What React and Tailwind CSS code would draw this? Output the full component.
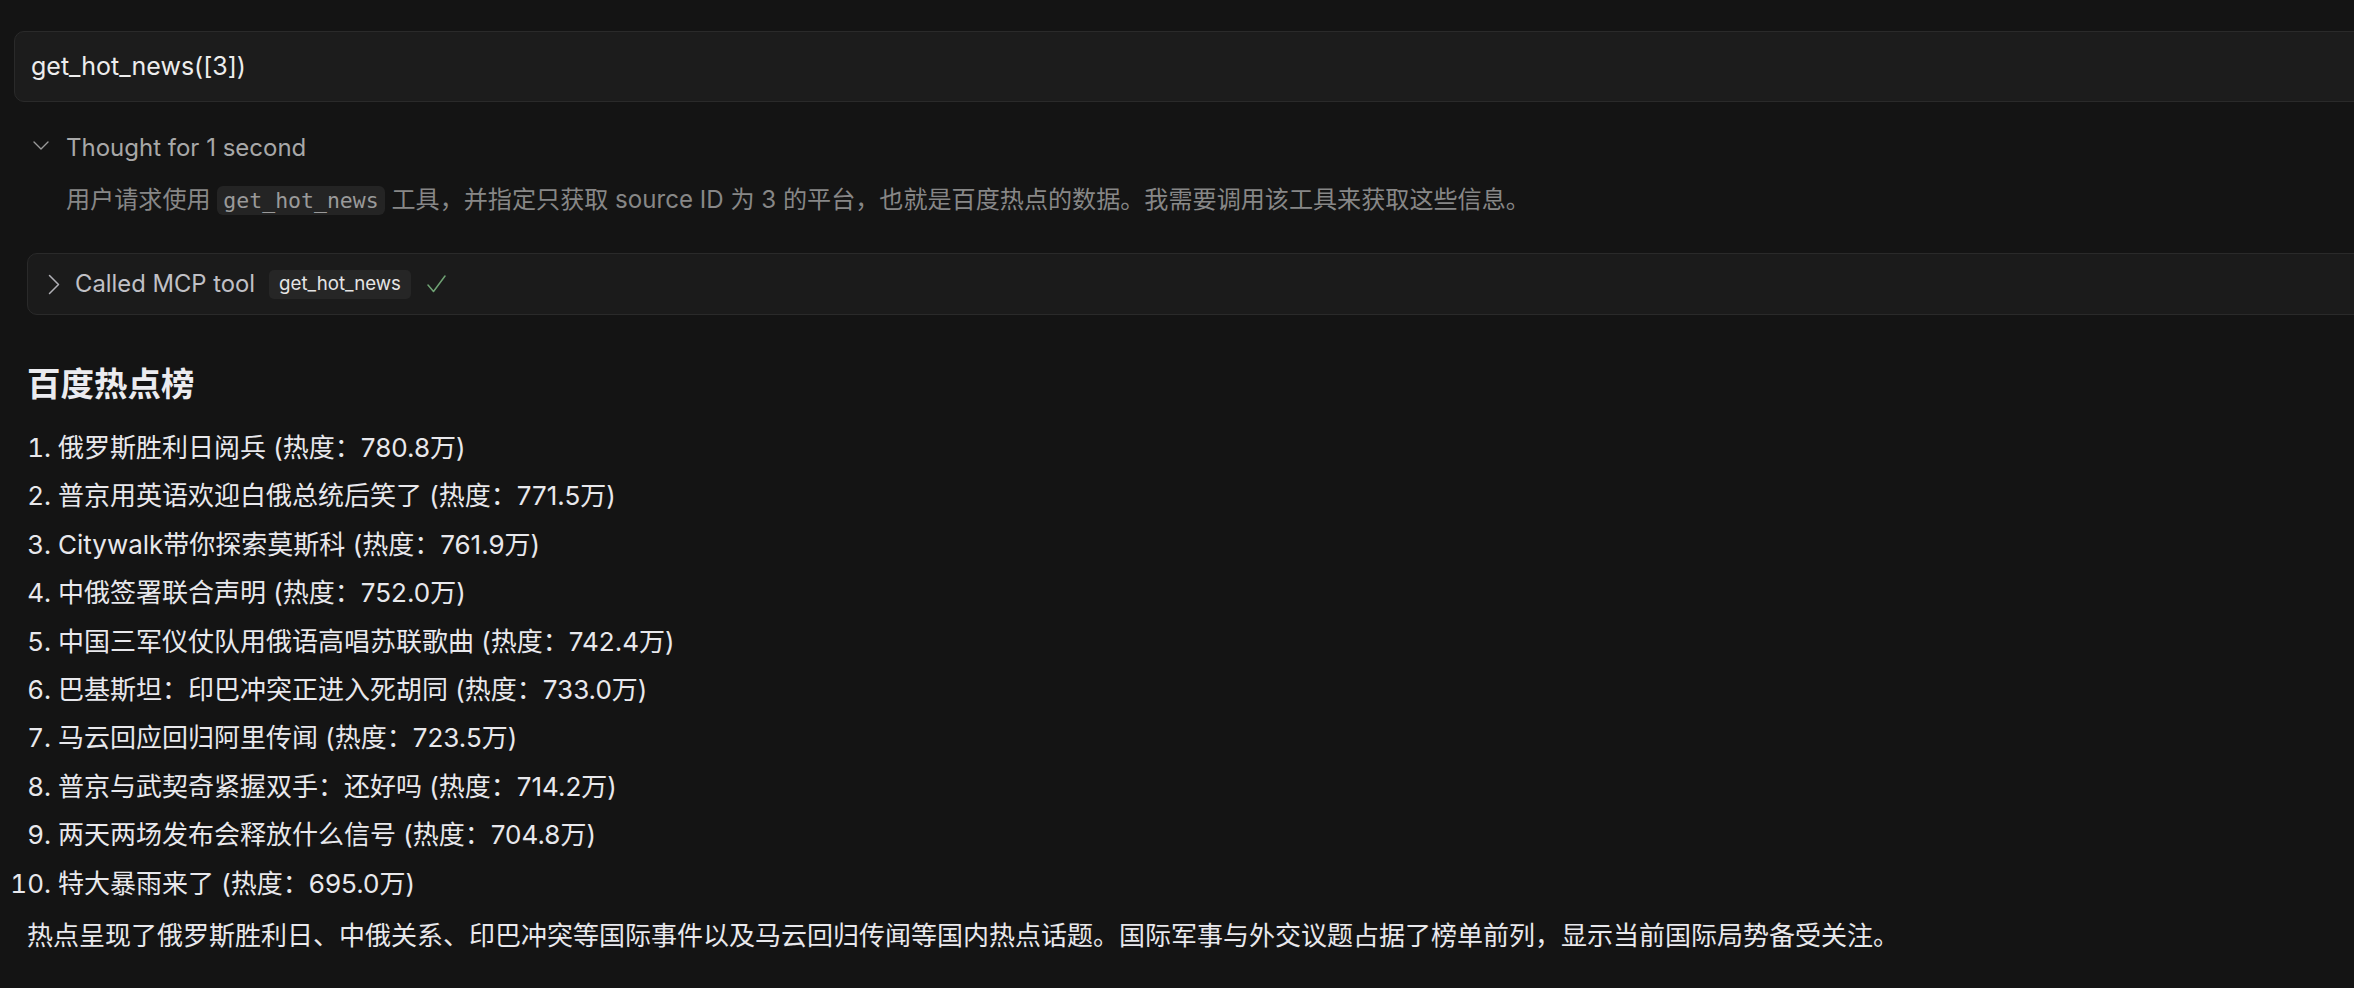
import React from "react";

const items = [
  "俄罗斯胜利日阅兵 (热度：780.8万)",
  "普京用英语欢迎白俄总统后笑了 (热度：771.5万)",
  "Citywalk带你探索莫斯科 (热度：761.9万)",
  "中俄签署联合声明 (热度：752.0万)",
  "中国三军仪仗队用俄语高唱苏联歌曲 (热度：742.4万)",
  "巴基斯坦：印巴冲突正进入死胡同 (热度：733.0万)",
  "马云回应回归阿里传闻 (热度：723.5万)",
  "普京与武契奇紧握双手：还好吗 (热度：714.2万)",
  "两天两场发布会释放什么信号 (热度：704.8万)",
  "特大暴雨来了 (热度：695.0万)",
];

export default function App() {
  return (
    <div className="min-h-screen overflow-hidden bg-[#141414] pl-[14px] pt-[31px] font-[family-name:Inter,'Noto_Sans_CJK_SC',sans-serif] text-[#e8e8ec]">
      {/* tool call input */}
      <div className="-mr-10 flex h-[71px] items-center rounded-[10px] border border-[#2a2a2a] bg-[#1c1c1c] pl-[16px] text-[25px] text-[#ededed]">
        get_hot_news([3])
      </div>

      {/* thought header */}
      <div className="mt-[30px] flex h-[32px] items-center">
        <svg
          className="ml-[19px] mt-[-6px]"
          width="16"
          height="9"
          viewBox="0 0 16 9"
          fill="none"
          stroke="#9a9a9a"
          strokeWidth="1.4"
          strokeLinecap="round"
          strokeLinejoin="round"
        >
          <polyline points="1,1 8,8 15,1" />
        </svg>
        <span className="ml-[17px] text-[24px] text-[#a8a8a8]">Thought for 1 second</span>
      </div>

      {/* thought content */}
      <div className="ml-[52px] mt-[18px] text-[24.1px] leading-[36px] text-[#878787]">
        用户请求使用{" "}
        <code className="rounded-[6px] bg-[#242424] px-[6px] py-[2px] font-[family-name:'DejaVu_Sans_Mono',monospace] text-[21.5px] text-[#9a9a9a]">
          get_hot_news
        </code>{" "}
        工具，并指定只获取 source ID 为 3 的平台，也就是百度热点的数据。我需要调用该工具来获取这些信息。
      </div>

      {/* called MCP tool */}
      <div className="-mr-10 ml-[13px] mt-[34px] flex h-[62px] items-center rounded-[10px] border border-[#2a2a2a] bg-[#1b1b1b] pl-[20px]">
        <svg
          width="12"
          height="21"
          viewBox="0 0 12 21"
          fill="none"
          stroke="#b0b0b6"
          strokeWidth="1.5"
          strokeLinecap="round"
          strokeLinejoin="round"
        >
          <polyline points="1.5,1.5 10.5,10.5 1.5,19.5" />
        </svg>
        <span className="ml-[15px] text-[23.8px] text-[#c0c0c6]">Called MCP tool</span>
        <span className="ml-[14px] flex h-[29px] items-center rounded-[5px] bg-[#262626] px-[10px] text-[18.7px] text-[#e4e4e4]">
          get_hot_news
        </span>
        <svg
          className="ml-[16px]"
          width="19"
          height="18"
          viewBox="0 0 19 18"
          fill="none"
          stroke="#6fa274"
          strokeWidth="1.5"
          strokeLinecap="round"
          strokeLinejoin="round"
        >
          <polyline points="1,10 6.5,16.5 18,1" />
        </svg>
      </div>

      {/* heading */}
      <h2 className="ml-[13px] mt-[47px] text-[33.5px] font-bold leading-[44px] text-[#ebebef]">
        百度热点榜
      </h2>

      {/* list */}
      <ol className="ml-[13px] mt-[18px] list-decimal pl-[31px] text-[26px] leading-[48.4px]">
        {items.map((t) => (
          <li key={t}>{t}</li>
        ))}
      </ol>

      <p className="ml-[13px] mt-[8px] text-[26px] leading-[40px]">
        热点呈现了俄罗斯胜利日、中俄关系、印巴冲突等国际事件以及马云回归传闻等国内热点话题。国际军事与外交议题占据了榜单前列，显示当前国际局势备受关注。
      </p>
    </div>
  );
}
